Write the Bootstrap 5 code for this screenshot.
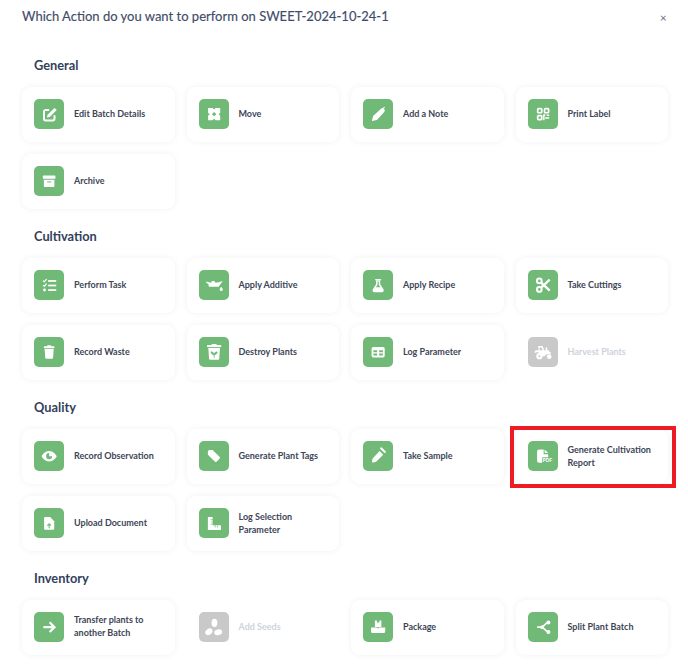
<!DOCTYPE html>
<html lang="en">
<head>
<meta charset="utf-8">
<title>Actions</title>
<link href="https://cdn.jsdelivr.net/npm/bootstrap@5.3.0/dist/css/bootstrap.min.css" rel="stylesheet">
<style>
html,body{background:#fff;height:666px;overflow:hidden}
body{font-family:Lato,"Noto Sans",sans-serif;position:relative}
.sheet{padding:7px 19.7px 0 22px}
.sheet-title{font-size:13px;font-weight:400;color:#3f4c68;line-height:18px;margin:0;-webkit-text-stroke:.15px #3f4c68}
.sheet-close{font-size:12px;color:#6c7380;line-height:12px;width:12px;padding:0;border:0;background:none;margin:5px -1px 0 0}
.group-name{font-size:12.8px;font-weight:700;color:#33415c;line-height:17px;padding-left:12px;margin:0 0 12.800px}
.group-one{margin-top:32.200px}
.group-rest{margin-top:19.500px}
.tiles{display:grid;grid-template-columns:repeat(4,1fr);gap:12.300px 11.700px}
.tile{height:54.700px;border-radius:9px;background:#fff;box-shadow:0 0 7px rgba(30,40,60,.06);padding:0 14px 0 12px;gap:9.700px;color:#3d4556;font-size:9px;font-weight:700;line-height:13px}
.tile span{margin-bottom:1.500px}
.tile-icon{width:30.300px;height:30.300px;flex:none;border-radius:5px;background:#70b977}
.tile-icon svg{display:block;width:100%;height:100%}
.tile-off{box-shadow:none;color:#ced3dc}
.tile-off .tile-icon{background:#c9c9c9}
.marker{position:absolute;left:510px;top:426px;width:166px;height:62px;border:4px solid #ed1c24;pointer-events:none}
</style>
</head>
<body>
<svg width="0" height="0" class="position-absolute">
<defs>
<g id="i-edit"><path d="M20.300 16v3.600a1.600 1.600 0 0 1-1.600 1.600h-7.200a1.600 1.600 0 0 1-1.600-1.600v-7.200a1.600 1.600 0 0 1 1.600-1.600H15" fill="none" stroke="#fff" stroke-width="2"/><path d="M20.300 8.800 22.500 11 15.600 17.800 12.800 18.400 13.400 15.600z" fill="#fff"/></g>
<g id="i-move"><path fill="#fff" fill-rule="evenodd" d="M9 9h4.500l1.500 1.500 1.500-1.500H21v4.500l-1.500 1.500 1.500 1.500V21h-4.500L15 19.500 13.500 21H9v-4.500l1.500-1.500L9 13.500zM15 12.800 17.200 15 15 17.200 12.800 15z"/></g>
<g id="i-pen"><path fill="#fff" d="M8.800 21.800l1.200-5 7.800-7.200q1.600-1.300 3.100.2t.1 3.100l-7.200 7.800z"/><path stroke="#fff" stroke-width="1.100" d="M19.500 9.500l2-1.500"/></g>
<g id="i-qr" fill="none" stroke="#fff" stroke-width="1.700"><rect x="9.600" y="9.600" width="4" height="4" rx=".8"/><rect x="16.400" y="9.600" width="4" height="4" rx=".8"/><rect x="9.600" y="16.400" width="4" height="4" rx=".8"/><path d="M15.700 15.800h1.500M15.700 15v6M17 18.800h4M18.500 16.100h2.500" stroke-width="1.400"/></g>
<g id="i-box" fill="#fff"><rect x="8.800" y="9.500" width="12.400" height="3.200" rx=".6"/><path d="M9.800 13.700h10.400v6a1.200 1.200 0 0 1-1.200 1.200H11a1.200 1.200 0 0 1-1.200-1.200z"/><rect x="13" y="15.300" width="4" height="1" fill="#70b977"/></g>
<g id="i-task" fill="#fff"><rect x="14" y="10" width="8" height="1.700"/><rect x="14" y="14.500" width="8" height="1.700"/><rect x="14" y="19" width="8" height="1.700"/><path d="M9 10.500l1.200 1.200L12.500 9" fill="none" stroke="#fff" stroke-width="1.300"/><path d="M9 15l1.200 1.200L12.500 13.500" fill="none" stroke="#fff" stroke-width="1.300"/><circle cx="10.400" cy="19.800" r="1.400"/></g>
<g id="i-oil" fill="#fff"><path d="M7 11.500l3.500 1h2v-1.500h3v1.500h3l5-1.500-4 5.500h-9a1 1 0 0 1-1-1v-1.500l-2.500-1.500z"/><path d="M22 16.500q1.500 1.800 1.500 2.700a1.500 1.500 0 0 1-3 0q0-.9 1.500-2.700z"/></g>
<g id="i-flask" fill="#fff"><rect x="12" y="8.800" width="6" height="1.500" rx=".7"/><path fill-rule="evenodd" d="M13 10.300h4v3.700l3.300 5a2 2 0 0 1-1.600 3h-7.400a2 2 0 0 1-1.600-3L13 14zM14.400 11.500v3l-1.600 2.500h4.400l-1.600-2.500v-3z"/></g>
<g id="i-scissors"><circle cx="11.200" cy="10.800" r="2.300" fill="none" stroke="#fff" stroke-width="2"/><circle cx="11.200" cy="19.200" r="2.300" fill="none" stroke="#fff" stroke-width="2"/><path d="M13 12.500 21.500 20.500M13 17.500 21.500 9.500" stroke="#fff" stroke-width="2.400"/></g>
<g id="i-trash" fill="#fff"><rect x="9.800" y="9.200" width="10.400" height="2" rx=".5"/><rect x="13" y="8.200" width="4" height="1.500" rx=".5"/><path d="M10.500 12h9l-.6 8.300a1.200 1.200 0 0 1-1.200 1.200h-5.400a1.200 1.200 0 0 1-1.200-1.200z"/></g>
<g id="i-plantbin"><rect x="8" y="8" width="14" height="2" fill="#fff"/><rect x="12.500" y="7" width="5" height="1.500" fill="#fff"/><path fill="#fff" d="M9.200 11h11.600l-.8 10.500a1 1 0 0 1-1 1h-8a1 1 0 0 1-1-1z"/><path d="M15 20.500v-3.700M15 17c-.3-1.300-1.300-2.200-3-2.200 0 1.500 1.200 2.700 3 2.600 1.800.1 3-1.100 3-2.600-1.700 0-2.700.9-3 2.200z" fill="#70b977" stroke="#70b977" stroke-width=".9"/></g>
<g id="i-table" fill="#fff"><path fill-rule="evenodd" d="M10.200 9.800h9.600a1.700 1.700 0 0 1 1.700 1.700v7a1.700 1.700 0 0 1-1.700 1.700h-9.600a1.700 1.700 0 0 1-1.700-1.700v-7a1.700 1.700 0 0 1 1.700-1.700zM10.300 13v2h3.700v-2zM16 13v2h3.700v-2zM10.300 16.300v2h3.700v-2zM16 16.300v2h3.700v-2z"/></g>
<g id="i-tractor"><path fill="#fff" fill-rule="evenodd" d="M10 9h4.500l1.500 4h1.500v-2.500h1.500V13h1.500c.2 1 1 1.800 2 2v1.800h-2.500c-1.800 0-3 1-3.300 2.200h-3a4.500 4.500 0 0 0-7-3v-2.500l2-.5h2zM11.500 10.400V13h3l-1-2.600z"/><circle cx="11.300" cy="19" r="3.100" fill="#fff"/><circle cx="11.300" cy="19" r="1" fill="#c9c9c9"/><circle cx="21" cy="19.500" r="2.300" fill="#fff"/></g>
<g id="i-eye" fill="#fff"><path fill-rule="evenodd" d="M15 9.800c4 0 6.700 3.400 7.500 5.200-.8 1.800-3.500 5.200-7.500 5.200s-6.700-3.400-7.500-5.200c.8-1.800 3.500-5.200 7.500-5.200zm0 2.200a3 3 0 1 0 3 3h-3z"/></g>
<g id="i-tag" fill="#fff"><path d="M10.500 8.800h3l6.800 6.800a1.400 1.400 0 0 1 0 2l-2.700 2.700a1.400 1.400 0 0 1-2 0L8.800 13.500v-3a1.700 1.700 0 0 1 1.700-1.700z"/></g>
<g id="i-tube" fill="#fff"><path d="M9 20l.500-2.700 7-7.300 3.500 3.500-7 7-2.800.700a.9.900 0 0 1-1.200-1.200z"/><rect x="16.300" y="8" width="7" height="2" transform="rotate(45 19.800 9)" rx=".8"/></g>
<g id="i-pdf"><path fill="#fff" d="M9 10.500a2 2 0 0 1 2-2h4.500v4.500H20v3.200h-6v5.300H11a2 2 0 0 1-2-2zM16.500 8.500l3.500 3.500h-3.500z"/><text x="14.300" y="21.200" fill="#fff" font-family="Liberation Sans,sans-serif" font-weight="700" font-size="4.800">PDF</text></g>
<g id="i-upload"><path fill="#fff" d="M11 9h5l4 4v7.300a1.300 1.300 0 0 1-1.300 1.300H11.300A1.300 1.300 0 0 1 10 20.300V10a1 1 0 0 1 1-1z"/><path d="M15 20v-4M13.200 17.500 15 15.700l1.800 1.800" fill="none" stroke="#70b977" stroke-width="1.100"/></g>
<g id="i-ruler" fill="#fff"><path d="M8.800 9h4.700v8h8.200V21.800H8.800z"/><path d="M11.500 11.500h2M12 13.700h1.500M11.500 15.900h2M16 19.300v-2.300M18.200 19.300v-2" stroke="#70b977" stroke-width=".7"/></g>
<g id="i-arrow"><path d="M9.300 15h10.700M15.500 10.200 20.300 15l-4.800 4.800" fill="none" stroke="#fff" stroke-width="2.200"/></g>
<g id="i-seeds" fill="#fff"><ellipse cx="15.300" cy="10.800" rx="2.900" ry="4"/><ellipse cx="9.800" cy="19.600" rx="3.800" ry="2.900" transform="rotate(-35 9.800 19.600)"/><ellipse cx="19" cy="20" rx="4" ry="2.800" transform="rotate(-15 19 20)"/></g>
<g id="i-pkg" fill="#fff"><path d="M11.800 8.500h2v2h2.400v-2h2v6.300h-6.400zM8 15.300h6.300v.9h1.400v-.9H22v4a1.500 1.500 0 0 1-1.500 1.500h-11A1.500 1.500 0 0 1 8 19.300z"/></g>
<g id="i-split"><path d="M9 15h5l5-4.500M14 15l5 4.500" fill="none" stroke="#fff" stroke-width="1.600"/><circle cx="20.200" cy="10.300" r="2" fill="#fff"/><circle cx="20.200" cy="19.700" r="2" fill="#fff"/><circle cx="14" cy="15" r="1.900" fill="#fff"/></g>
</defs>
</svg>
<div class="sheet">
  <div class="d-flex justify-content-between align-items-start">
    <h1 class="sheet-title">Which Action do you want to perform on SWEET-2024-10-24-1</h1>
    <button type="button" class="sheet-close" aria-label="Close">×</button>
  </div>

  <h2 class="group-name group-one">General</h2>
  <div class="tiles">
    <div class="tile d-flex align-items-center"><div class="tile-icon"><svg viewBox="0 0 30 30"><use href="#i-edit"/></svg></div><span>Edit Batch Details</span></div>
    <div class="tile d-flex align-items-center"><div class="tile-icon"><svg viewBox="0 0 30 30"><use href="#i-move"/></svg></div><span>Move</span></div>
    <div class="tile d-flex align-items-center"><div class="tile-icon"><svg viewBox="0 0 30 30"><use href="#i-pen"/></svg></div><span>Add a Note</span></div>
    <div class="tile d-flex align-items-center"><div class="tile-icon"><svg viewBox="0 0 30 30"><use href="#i-qr"/></svg></div><span>Print Label</span></div>
    <div class="tile d-flex align-items-center"><div class="tile-icon"><svg viewBox="0 0 30 30"><use href="#i-box"/></svg></div><span>Archive</span></div>
  </div>

  <h2 class="group-name group-rest">Cultivation</h2>
  <div class="tiles">
    <div class="tile d-flex align-items-center"><div class="tile-icon"><svg viewBox="0 0 30 30"><use href="#i-task"/></svg></div><span>Perform Task</span></div>
    <div class="tile d-flex align-items-center"><div class="tile-icon"><svg viewBox="0 0 30 30"><use href="#i-oil"/></svg></div><span>Apply Additive</span></div>
    <div class="tile d-flex align-items-center"><div class="tile-icon"><svg viewBox="0 0 30 30"><use href="#i-flask"/></svg></div><span>Apply Recipe</span></div>
    <div class="tile d-flex align-items-center"><div class="tile-icon"><svg viewBox="0 0 30 30"><use href="#i-scissors"/></svg></div><span>Take Cuttings</span></div>
    <div class="tile d-flex align-items-center"><div class="tile-icon"><svg viewBox="0 0 30 30"><use href="#i-trash"/></svg></div><span>Record Waste</span></div>
    <div class="tile d-flex align-items-center"><div class="tile-icon"><svg viewBox="0 0 30 30"><use href="#i-plantbin"/></svg></div><span>Destroy Plants</span></div>
    <div class="tile d-flex align-items-center"><div class="tile-icon"><svg viewBox="0 0 30 30"><use href="#i-table"/></svg></div><span>Log Parameter</span></div>
    <div class="tile tile-off d-flex align-items-center"><div class="tile-icon"><svg viewBox="0 0 30 30"><use href="#i-tractor"/></svg></div><span>Harvest Plants</span></div>
  </div>

  <h2 class="group-name group-rest">Quality</h2>
  <div class="tiles">
    <div class="tile d-flex align-items-center"><div class="tile-icon"><svg viewBox="0 0 30 30"><use href="#i-eye"/></svg></div><span>Record Observation</span></div>
    <div class="tile d-flex align-items-center"><div class="tile-icon"><svg viewBox="0 0 30 30"><use href="#i-tag"/></svg></div><span>Generate Plant Tags</span></div>
    <div class="tile d-flex align-items-center"><div class="tile-icon"><svg viewBox="0 0 30 30"><use href="#i-tube"/></svg></div><span>Take Sample</span></div>
    <div class="tile d-flex align-items-center"><div class="tile-icon"><svg viewBox="0 0 30 30"><use href="#i-pdf"/></svg></div><span>Generate Cultivation Report</span></div>
    <div class="tile d-flex align-items-center"><div class="tile-icon"><svg viewBox="0 0 30 30"><use href="#i-upload"/></svg></div><span>Upload Document</span></div>
    <div class="tile d-flex align-items-center"><div class="tile-icon"><svg viewBox="0 0 30 30"><use href="#i-ruler"/></svg></div><span>Log Selection Parameter</span></div>
  </div>

  <h2 class="group-name group-rest">Inventory</h2>
  <div class="tiles">
    <div class="tile d-flex align-items-center"><div class="tile-icon"><svg viewBox="0 0 30 30"><use href="#i-arrow"/></svg></div><span>Transfer plants to another Batch</span></div>
    <div class="tile tile-off d-flex align-items-center"><div class="tile-icon"><svg viewBox="0 0 30 30"><use href="#i-seeds"/></svg></div><span>Add Seeds</span></div>
    <div class="tile d-flex align-items-center"><div class="tile-icon"><svg viewBox="0 0 30 30"><use href="#i-pkg"/></svg></div><span>Package</span></div>
    <div class="tile d-flex align-items-center"><div class="tile-icon"><svg viewBox="0 0 30 30"><use href="#i-split"/></svg></div><span>Split Plant Batch</span></div>
  </div>
</div>
<div class="marker"></div>
<script src="https://cdn.jsdelivr.net/npm/bootstrap@5.3.0/dist/js/bootstrap.bundle.min.js"></script>
</body>
</html>
